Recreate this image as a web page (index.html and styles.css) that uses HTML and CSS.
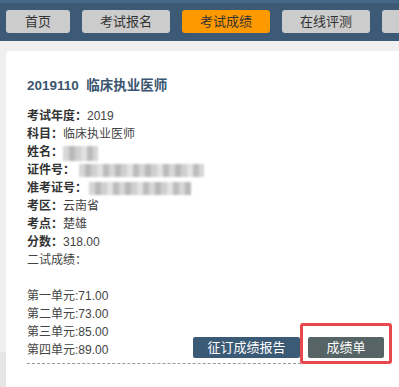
FILE: index.html
```html
<!DOCTYPE html>
<html lang="zh">
<head>
<meta charset="utf-8">
<title>考试成绩</title>
<link rel="stylesheet" href="styles.css">
</head>
<body>
<nav class="topbar">
  <a class="nav-btn nav-first">首页</a>
  <a class="nav-btn">考试报名</a>
  <a class="nav-btn active">考试成绩</a>
  <a class="nav-btn">在线评测</a>
  <a class="nav-btn nav-cut"></a>
</nav>
<main class="card">
  <h2 class="title">2019110&nbsp;&nbsp;临床执业医师</h2>
  <div class="body">
    <div class="info">
      <div class="row"><b>考试年度：</b>2019</div>
      <div class="row"><b>科目：</b>临床执业医师</div>
      <div class="row"><b>姓名：</b><span class="blur blur-name"></span></div>
      <div class="row"><b>证件号：</b><span class="blur blur-id"></span></div>
      <div class="row"><b>准考证号：</b><span class="blur blur-ticket"></span></div>
      <div class="row"><b>考区：</b>云南省</div>
      <div class="row"><b>考点：</b>楚雄</div>
      <div class="row"><b>分数：</b>318.00</div>
      <div class="row">二试成绩：</div>
      <div class="row empty"></div>
      <div class="row">第一单元:71.00</div>
      <div class="row">第二单元:73.00</div>
      <div class="row">第三单元:85.00</div>
      <div class="row">第四单元:89.00</div>
    </div>
    <div class="actions">
      <a class="act-btn act-primary">征订成绩报告</a>
      <a class="act-btn act-grey">成绩单</a>
    </div>
  </div>
  <div class="dash"></div>
</main>
</body>
</html>
```
FILE: styles.css
```css
html, body {
  margin: 0;
  padding: 0;
  overflow: hidden;
}
body {
  height: 387px;
  background: linear-gradient(to bottom, #f0f0f0 352px, #e6e6e6 352px);
  font-family: "Liberation Sans", "Noto Sans CJK SC", sans-serif;
  color: #333;
}
.topbar {
  height: 41px;
  box-sizing: border-box;
  background: #3c5a75;
  border-top: 3px solid #466888;
  display: flex;
  gap: 12px;
  padding: 7px 0 0 6px;
}
.nav-btn {
  flex: 0 0 88px;
  height: 23px;
  line-height: 23px;
  background: #cccccc;
  border-radius: 3px;
  text-align: center;
  font-size: 13px;
  color: #333;
}
.nav-first {
  flex-basis: 64px;
}
.nav-cut {
  flex: 1 1 auto;
  border-radius: 3px 0 0 3px;
}
.nav-btn.active {
  background: #ff9900;
}
.card {
  margin: 10px 0 0 6px;
  height: 340px;
  background: #fff;
  border-radius: 5px 0 0 0;
  padding: 25px 0 0 21px;
  box-sizing: border-box;
}
.title {
  margin: 0;
  font-size: 13.5px;
  line-height: 20px;
  font-weight: bold;
  color: #3a5670;
}
.body {
  margin-top: 11px;
  width: 357px;
  display: grid;
}
.info, .actions {
  grid-area: 1 / 1;
}
.row {
  font-size: 12px;
  line-height: 18px;
  height: 18px;
  white-space: nowrap;
  display: flex;
  align-items: center;
  color: #444;
}
.row b {
  font-weight: bold;
  color: #333;
}
.blur {
  display: inline-block;
  height: 13px;
  filter: blur(1.2px);
  background: repeating-linear-gradient(90deg, #d6d6d6 0 6px, #b9b9b9 6px 12px, #cfcfcf 12px 18px, #e2e2e2 18px 24px, #bdbdbd 24px 30px);
}
.blur-name {
  width: 35px;
  height: 15px;
  margin-top: 3px;
}
.blur-id {
  width: 125px;
  margin-left: 4px;
}
.blur-ticket {
  width: 102px;
  margin-left: 2px;
}
.actions {
  justify-self: end;
  align-self: end;
  display: flex;
  gap: 8px;
  margin-bottom: 1px;
}
.act-btn {
  height: 21px;
  line-height: 21px;
  color: #fff;
  font-size: 13px;
  text-align: center;
  border-radius: 2px;
}
.act-primary {
  width: 107px;
  background: #3b5a76;
}
.act-grey {
  width: 76px;
  background: #566466;
  position: relative;
}
.act-grey::after {
  content: "";
  position: absolute;
  left: -8px;
  right: -8px;
  top: -14px;
  bottom: -6px;
  border: 3px solid #e8474d;
  border-radius: 3px;
}
.dash {
  margin-top: 4px;
  width: 274px;
  border-top: 1px dashed #999;
}
```
